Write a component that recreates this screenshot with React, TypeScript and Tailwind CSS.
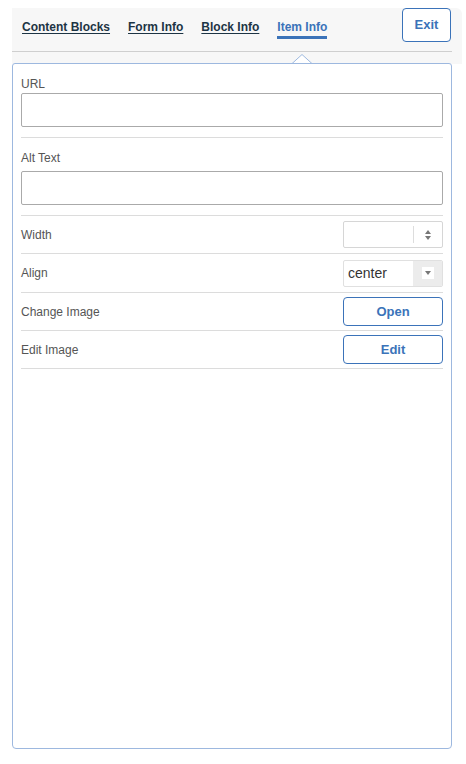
import React, { useState } from 'react';

const TABS = ['Content Blocks', 'Form Info', 'Block Info', 'Item Info'];

const Row: React.FC<{ label: string; children: React.ReactNode; h?: string }> = ({ label, children, h }) => (
  <div className={`flex items-center justify-between border-b border-[#dcdcdc] ${h ?? 'h-[38px]'}`}>
    <span className="text-[12px] text-[#555]">{label}</span>
    {children}
  </div>
);

const App: React.FC = () => {
  const [active, setActive] = useState('Item Info');

  return (
    <div className="min-h-[764px] bg-white pt-2 pl-3 font-['Liberation_Sans',Arial,sans-serif]">
      {/* ===== header ===== */}
      <div className="w-[450px] rounded-tr-md bg-[#f7f7f7]">
        <div className="flex h-[44px] w-[440px] items-start border-b border-[#cfcfcf]">
          <div className="flex items-start gap-[18px] pt-[12px] pl-[10px]">
            {TABS.map(t => (
              <button
                key={t}
                onClick={() => setActive(t)}
                className={`text-[12px] font-bold leading-[15px] ${
                  active === t
                    ? 'border-b-[3px] border-[#3b73b9] pb-[1px] text-[#3b73b9]'
                    : 'text-[#1d3444] underline underline-offset-2'
                }`}
              >
                {t}
              </button>
            ))}
          </div>
          <button className="ml-auto mr-px h-[34px] w-[49px] rounded-[4px] border border-[#3b73b9] bg-white text-[13px] font-bold text-[#3b73b9]">
            Exit
          </button>
        </div>

        {/* notch row */}
        <div className="relative h-[12px] w-[440px]">
          <svg className="absolute left-[279px] top-[2px]" width="22" height="11" viewBox="0 0 22 11">
            <path d="M0 10.5 L11 0.5 L22 10.5" fill="#fff" stroke="#9db8df" strokeWidth="1" />
          </svg>
        </div>
      </div>

      {/* ===== panel ===== */}
      <div className="relative -mt-px flex h-[686px] w-[440px] flex-col rounded-b-[4px] rounded-t-[3px] border border-[#9db8df] bg-white px-2 pt-[12px]">
        <div className="border-b border-[#dcdcdc] pb-[10px]">
          <div className="text-[12px] leading-[16px] text-[#555]">URL</div>
          <input className="mt-px h-[34px] w-full rounded-[2px] border border-[#aaa] outline-none" />
        </div>
        <div className="border-b border-[#dcdcdc] pt-[12px] pb-[10px]">
          <div className="text-[12px] leading-[16px] text-[#555]">Alt Text</div>
          <input className="mt-[5px] h-[34px] w-full rounded-[2px] border border-[#aaa] outline-none" />
        </div>

        <Row label="Width">
          <div className="flex h-[27px] w-[100px] items-center rounded-[2px] border border-[#d6d6d6]">
            <div className="flex-1" />
            <div className="h-[17px] w-px bg-[#ddd]" />
            <div className="flex w-[28px] flex-col items-center gap-[2px]">
              <span className="h-0 w-0 border-x-[3px] border-b-[4px] border-x-transparent border-b-[#777]" />
              <span className="h-0 w-0 border-x-[3px] border-t-[4px] border-x-transparent border-t-[#777]" />
            </div>
          </div>
        </Row>

        <Row label="Align" h="h-[39px]">
          <div className="flex h-[27px] w-[100px] items-stretch overflow-hidden rounded-[2px] border border-[#e0e0e0]">
            <span className="flex flex-1 items-center pl-1 text-[14px] text-[#333]">center</span>
            <span className="flex w-[29px] items-center justify-center bg-[#ececec]">
              <span className="flex h-[12px] w-[12px] items-center justify-center bg-white">
                <span className="h-0 w-0 border-x-[3px] border-t-[4px] border-x-transparent border-t-[#777]" />
              </span>
            </span>
          </div>
        </Row>

        <Row label="Change Image">
          <button className="h-[29px] w-[100px] rounded-[4px] border border-[#3b73b9] bg-white text-[13px] font-bold text-[#3b73b9]">
            Open
          </button>
        </Row>

        <Row label="Edit Image">
          <button className="h-[29px] w-[100px] rounded-[4px] border border-[#3b73b9] bg-white text-[13px] font-bold text-[#3b73b9]">
            Edit
          </button>
        </Row>
      </div>
    </div>
  );
};

export default App;
